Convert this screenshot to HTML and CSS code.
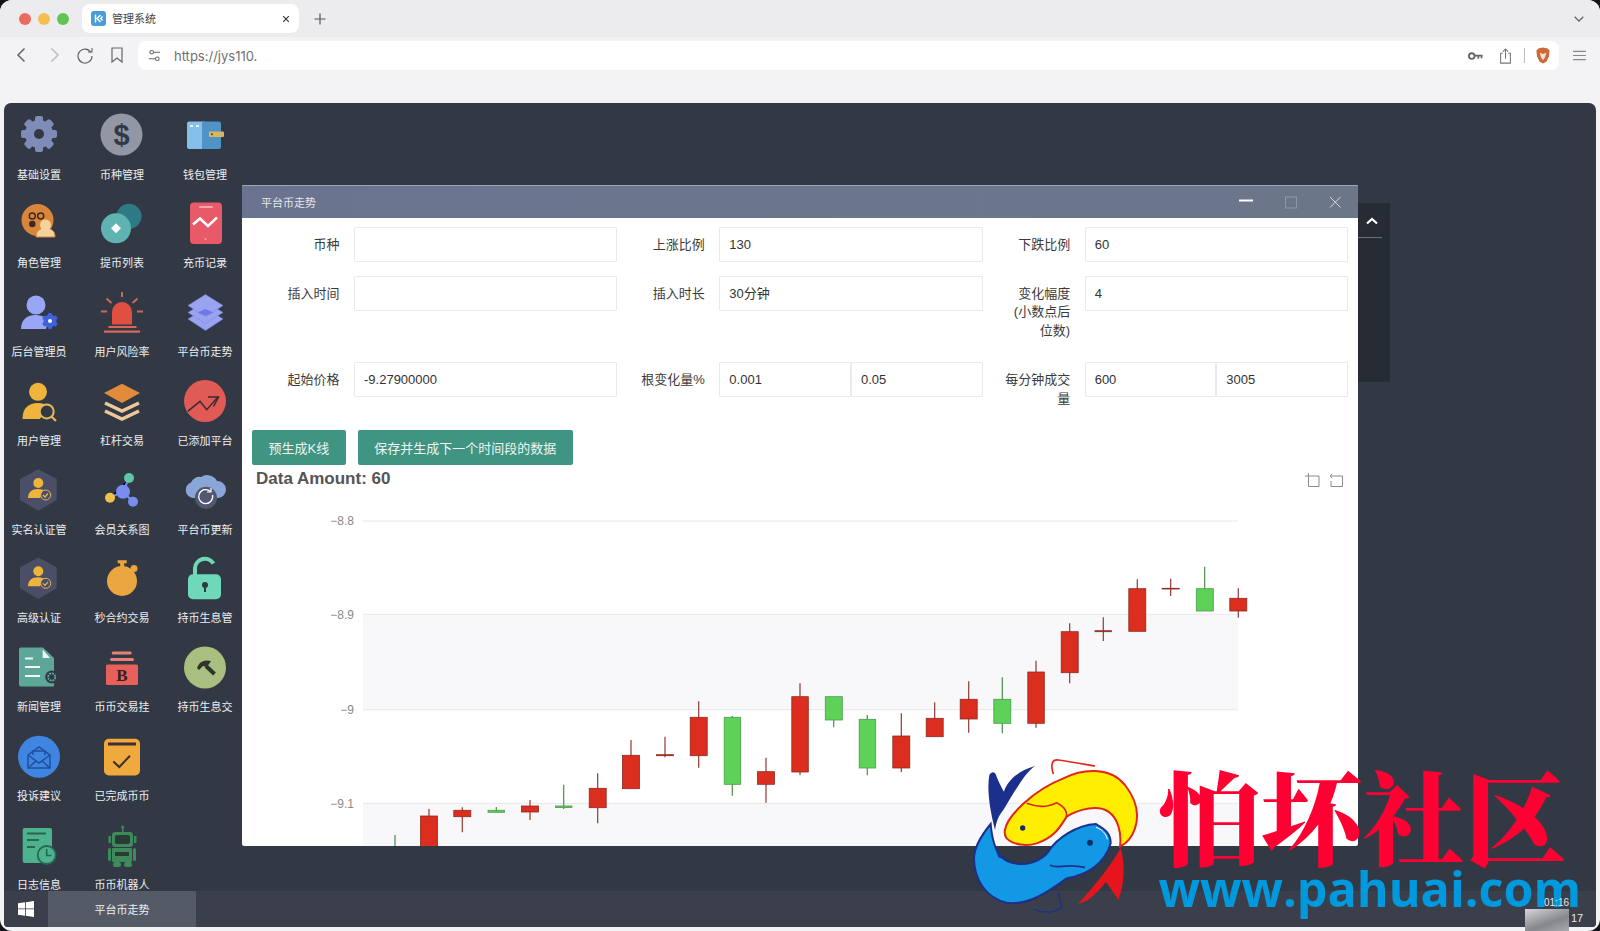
FILE: index.html
```html
<!DOCTYPE html>
<html lang="zh-CN">
<head>
<meta charset="utf-8">
<title>管理系统</title>
<link rel="stylesheet" href="styles.css">
</head>
<body>
<div class="browser">
  <header class="tabstrip">
    <div class="lights"><span class="light red"></span><span class="light yellow"></span><span class="light green"></span></div>
    <div class="tab">
      <svg class="favicon" viewBox="0 0 15 15"><rect width="15" height="15" rx="3" fill="#4a9dd8"/><path d="M4.500 3.500v8M9.500 4 6 7.500 9.500 11M11.500 5.500 9.700 7.500l1.800 2" fill="none" stroke="#fff" stroke-width="1.400"/></svg>
      <span class="tab-title">管理系统</span>
      <svg class="tab-close" viewBox="0 0 10 10"><path d="M1.500 1.500l7 7M8.500 1.500l-7 7" stroke="#333" stroke-width="1.400"/></svg>
    </div>
    <svg class="newtab" viewBox="0 0 12 12"><path d="M6 .5v11M.5 6h11" stroke="#555" stroke-width="1.200"/></svg>
    <svg class="tabmenu" viewBox="0 0 10 6"><path d="M.7.7 5 5 9.300.7" fill="none" stroke="#666" stroke-width="1.300"/></svg>
  </header>
  <nav class="toolbar">
    <svg class="tool" viewBox="0 0 20 20"><path d="M12.500 3.500 6 10l6.500 6.500" fill="none" stroke="#666" stroke-width="1.500"/></svg>
    <svg class="tool" viewBox="0 0 20 20"><path d="M7.500 3.500 14 10l-6.500 6.500" fill="none" stroke="#bdbdc0" stroke-width="1.500"/></svg>
    <svg class="tool" viewBox="0 0 20 20"><path d="M16 7.500A7 7 0 1 0 17 11" fill="none" stroke="#666" stroke-width="1.200"/><path d="M13 7h4V3" fill="none" stroke="#666" stroke-width="1.100"/></svg>
    <svg class="tool" viewBox="0 0 20 20"><path d="M5 3h10v14l-5-4-5 4z" fill="none" stroke="#666" stroke-width="1.200"/></svg>
    <div class="address">
      <svg class="tune" viewBox="0 0 14 14"><circle cx="4" cy="3.500" r="2" fill="none" stroke="#666" stroke-width="1.100"/><path d="M6 3.500h7M1 10.500h7" stroke="#666" stroke-width="1.100"/><circle cx="10" cy="10.500" r="2" fill="none" stroke="#666" stroke-width="1.100"/></svg>
      <span class="url">https://jys110.</span>
      <span class="spacer"></span>
      <svg class="addr-key" viewBox="0 0 16 10"><circle cx="4" cy="5" r="3" fill="none" stroke="#666" stroke-width="2"/><path d="M7 4.500h8.500M11 4.500v3.500M14.500 4.500v3" stroke="#666" stroke-width="1.800"/></svg>
      <svg class="addr-share" viewBox="0 0 14 18"><path d="M4 6H1.500v11h11V6H10" fill="none" stroke="#777" stroke-width="1.200"/><path d="M7 12V1M4 4l3-3 3 3" fill="none" stroke="#777" stroke-width="1.200"/></svg>
      <span class="addr-sep"></span>
      <svg class="addr-brave" viewBox="0 0 16 18"><path d="M3 1.500 8 .5l5 1 2 2.500-.7 6-2.800 5.500L8 17.500l-3.500-2L1.700 10 1 4z" fill="#d0693a"/><path d="M4.500 6 8 7.500 11.500 6 10 11l-2 3-2-3z" fill="#f6e3d2"/></svg>
    </div>
    <svg class="menu" viewBox="0 0 14 12"><path d="M0 1.500h14M0 6h14M0 10.500h14" stroke="#888" stroke-width="1.300"/></svg>
  </nav>
  <main class="desktop">
    <div class="icons">
      <div class="app"><svg class="ico" viewBox="0 0 42 42"><g fill="#7f8cb8"><circle cx="21" cy="21" r="14"/><g><rect x="17" y="3" width="8" height="36" rx="2"/><rect x="17" y="3" width="8" height="36" rx="2" transform="rotate(45 21 21)"/><rect x="17" y="3" width="8" height="36" rx="2" transform="rotate(90 21 21)"/><rect x="17" y="3" width="8" height="36" rx="2" transform="rotate(135 21 21)"/></g></g><circle cx="21" cy="21" r="5" fill="#323945"/></svg><span class="app-name">基础设置</span></div>
      <div class="app"><svg class="ico" viewBox="0 0 42 42"><circle cx="20.500" cy="21.500" r="21" fill="#9297a6"/><text class="ico-dollar" x="20.500" y="32">$</text></svg><span class="app-name">币种管理</span></div>
      <div class="app"><svg class="ico" viewBox="0 0 42 42"><rect x="3" y="8.500" width="19" height="27.500" rx="2" fill="#85c0ea"/><path d="M18 8.500h17a2 2 0 0 1 2 2V34a2 2 0 0 1-2 2H18z" fill="#4f93c7"/><rect x="25" y="18.500" width="15" height="5.500" rx="1" fill="#d8b65e"/><circle cx="28" cy="21.200" r="1" fill="#4a3f25"/><rect x="6" y="12" width="3" height="2" fill="#e8f4fc"/><rect x="12" y="12" width="3" height="2" fill="#e8f4fc"/></svg><span class="app-name">钱包管理</span></div>

      <div class="app"><svg class="ico" viewBox="0 0 42 42"><circle cx="19.500" cy="19" r="16" fill="#d9853c"/><circle cx="14.300" cy="15" r="3" fill="none" stroke="#3a2a22" stroke-width="1.500"/><circle cx="22.700" cy="15" r="3" fill="none" stroke="#3a2a22" stroke-width="1.500"/><circle cx="14.300" cy="23" r="3.200" fill="#3a2a22"/><path d="M18 36c0-6 3-7 5-8a6 6 0 1 1 9 0c2 1 5 2 5 8z" fill="#f2d39a" stroke="#d9853c" stroke-width="1"/></svg><span class="app-name">角色管理</span></div>
      <div class="app"><svg class="ico" viewBox="0 0 42 42"><circle cx="28" cy="15.300" r="12.500" fill="#2d7a84"/><circle cx="15" cy="27.300" r="15" fill="#5fb3b3"/><path d="M15 22.300l5 5-5 5-5-5z" fill="#fff"/></svg><span class="app-name">提币列表</span></div>
      <div class="app"><svg class="ico" viewBox="0 0 42 42"><rect x="6" y="1.500" width="32" height="41.500" rx="4" fill="#e85a68"/><rect x="15" y="5" width="14" height="2" rx="1" fill="#f4a7ae"/><path d="M9 23.500l7-6 8 7.500 9-8.500" fill="none" stroke="#fff" stroke-width="2.500"/><circle cx="21.500" cy="38" r="1" fill="#f4a7ae"/></svg><span class="app-name">充币记录</span></div>

      <div class="app"><svg class="ico" viewBox="0 0 42 42"><circle cx="18" cy="15" r="9.500" fill="#98a6f5"/><path d="M3 39c0-10 7-14 14-14 6 0 11 2 13 6l-2 8z" fill="#98a6f5"/><g fill="#3f62d8"><circle cx="32" cy="31" r="6.500"/><rect x="30" y="23" width="4" height="16" rx="1"/><rect x="30" y="23" width="4" height="16" rx="1" transform="rotate(60 32 31)"/><rect x="30" y="23" width="4" height="16" rx="1" transform="rotate(120 32 31)"/></g><circle cx="32" cy="31" r="2" fill="#fff"/></svg><span class="app-name">后台管理员</span></div>
      <div class="app"><svg class="ico" viewBox="0 0 42 42"><path d="M11 34.500V22a10 10 0 0 1 20 0v12.500z" fill="#e04f3f"/><g fill="#d9695c"><rect x="7.500" y="36" width="28" height="2"/><rect x="3" y="40.500" width="36" height="2.200"/></g><path d="M21 2v5M5.500 8.500l5 4.500M36.500 8.500l-5 4.500M0 21.500h6M36 21.500h6" stroke="#c9685c" stroke-width="2"/></svg><span class="app-name">用户风险率</span></div>
      <div class="app"><svg class="ico" viewBox="0 0 42 42"><g fill="#9aa3ef" stroke="#7b84de" stroke-width=".5"><path d="M21.500 18l17.500 11-17.500 11.500L4 29z"/><path d="M21.500 11.500 39 22.500 21.500 33.500 4 22.500z"/><path d="M21.500 4.500 39 15.500 21.500 27 4 15.500z"/></g><path d="M21.500 19l8 3.500-8 3.500-8-3.500z" fill="#6e78ee"/></svg><span class="app-name">平台币走势</span></div>

      <div class="app"><svg class="ico" viewBox="0 0 42 42"><circle cx="20" cy="12.800" r="9" fill="#efb43c"/><path d="M4.500 40c0-11 6-16 15.500-16 4 0 7 1 9 3l-7 13z" fill="#efb43c"/><circle cx="28.700" cy="32.400" r="7" fill="#323945" stroke="#e8b659" stroke-width="2"/><path d="M33.500 37.500l4.500 4.500" stroke="#e8b659" stroke-width="2.200"/></svg><span class="app-name">用户管理</span></div>
      <div class="app"><svg class="ico" viewBox="0 0 42 42"><path d="M21 4.800 39 14 21 24 3 14z" fill="#e08c3c"/><path d="M4 24l17 8 17-8M4 32l17 8 17-8" fill="none" stroke="#eec79c" stroke-width="3.500"/></svg><span class="app-name">杠杆交易</span></div>
      <div class="app"><svg class="ico" viewBox="0 0 42 42"><circle cx="21" cy="22" r="21" fill="#e05a56"/><path d="M3.700 32.400l12.300-10 6.700 8.300L34 18" fill="none" stroke="#3a2a30" stroke-width="1.500"/><path d="M24 18h10.500l-5 9.500" fill="none" stroke="#3a2a30" stroke-width="1.500"/></svg><span class="app-name">已添加平台</span></div>

      <div class="app"><svg class="ico" viewBox="0 0 42 42"><path d="M20.300 1.300 38.700 11v21L20.300 42.700 2 32V11z" fill="#4a4e66"/><circle cx="20.300" cy="15" r="5" fill="#efb43c"/><path d="M10 30c0-6 4-9 10-9 4 0 6 1 6 2l-4 7z" fill="#efb43c"/><circle cx="27.700" cy="27" r="5" fill="#4a4e66" stroke="#e8b659" stroke-width="1"/><path d="M25 27l2 2 3-3.500" fill="none" stroke="#e8b659" stroke-width="1.200"/></svg><span class="app-name">实名认证管</span></div>
      <div class="app"><svg class="ico" viewBox="0 0 42 42"><path d="M9 29.700 22 23.700 28 10M22 23.700 32 33.700" stroke="#7b8cf0" stroke-width="2"/><circle cx="22" cy="23.700" r="7" fill="#7b8cf0"/><circle cx="28" cy="10" r="5" fill="#5fc7a8"/><circle cx="9" cy="29.700" r="5" fill="#efc14a"/><circle cx="32" cy="33.700" r="5" fill="#7b8cf0"/></svg><span class="app-name">会员关系图</span></div>
      <div class="app"><svg class="ico" viewBox="0 0 42 42"><path d="M9 30a8 8 0 0 1-2-15.500A9 9 0 0 1 17 9 11 11 0 0 1 33 13a8.500 8.500 0 0 1 1 17z" fill="#8aa5d8"/><circle cx="22" cy="29.700" r="11" fill="#525870"/><path d="M28.500 27a7 7 0 1 1-2-3.500" fill="none" stroke="#fff" stroke-width="1.300"/><path d="M27 20v4h-4" fill="none" stroke="#fff" stroke-width="1.200"/></svg><span class="app-name">平台币更新</span></div>

      <div class="app"><svg class="ico" viewBox="0 0 42 42"><path d="M20.300 1.600 38.700 11.300v21L20.300 43 2 32.300v-21z" fill="#4a4e66"/><circle cx="20.300" cy="15.300" r="5" fill="#efb43c"/><path d="M10 30.300c0-6 4-9 10-9 4 0 6 1 6 2l-4 7z" fill="#efb43c"/><circle cx="27.700" cy="27.300" r="5" fill="#4a4e66" stroke="#e8b659" stroke-width="1"/><path d="M25 27.300l2 2 3-3.500" fill="none" stroke="#e8b659" stroke-width="1.200"/></svg><span class="app-name">高级认证</span></div>
      <div class="app"><svg class="ico" viewBox="0 0 42 42"><circle cx="21" cy="25" r="15" fill="#eba63f"/><path d="M16.700 4.300h9v3h-2.500v4h-4v-4h-2.500z" fill="#eba63f"/><circle cx="33" cy="12.600" r="3.500" fill="#eba63f"/><path d="M29 16l3-3" stroke="#eba63f" stroke-width="3"/></svg><span class="app-name">秒合约交易</span></div>
      <div class="app"><svg class="ico" viewBox="0 0 42 42"><path d="M11 19v-7a10 10 0 0 1 18.500-4.500" fill="none" stroke="#6fd8b8" stroke-width="4"/><rect x="4" y="18.300" width="33" height="25" rx="5" fill="#6fd8b8"/><circle cx="21" cy="29" r="3" fill="#2d3a3c"/><rect x="20" y="30" width="2" height="6" fill="#2d3a3c"/></svg><span class="app-name">持币生息管</span></div>

      <div class="app"><svg class="ico" viewBox="0 0 42 42"><path d="M3 2.500h22L36 13v28.500H3a2 2 0 0 1-2-2v-35a2 2 0 0 1 2-2z" fill="#5ca79a"/><path d="M24.700 4.500 32 13h-7.300z" fill="#f2f5f4"/><path d="M7 13.500h8M7 22h15M7 31h15" stroke="#f2f5f4" stroke-width="2"/><circle cx="33.700" cy="32" r="6.500" fill="#323945"/><circle cx="33.700" cy="32" r="3.600" fill="none" stroke="#5ca79a" stroke-width="1.800" stroke-dasharray="2 .8"/></svg><span class="app-name">新闻管理</span></div>
      <div class="app"><svg class="ico" viewBox="0 0 42 42"><rect x="10.700" y="6.500" width="20" height="3" rx="1.500" fill="#e8807a"/><rect x="9" y="13" width="24" height="3" rx="1.500" fill="#e8807a"/><rect x="5" y="19.500" width="32" height="20.500" rx="1.500" fill="#e8605c"/><text class="ico-b" x="21" y="36">B</text></svg><span class="app-name">币币交易挂</span></div>
      <div class="app"><svg class="ico" viewBox="0 0 42 42"><circle cx="21" cy="22.500" r="21" fill="#a9bf7f"/><path d="M13 23c2-6 7-9 14-7l-4 6-4-1-4 4z" fill="#2d3328"/><path d="M22 21l8.500 8" stroke="#2d3328" stroke-width="4"/></svg><span class="app-name">持币生息交</span></div>

      <div class="app"><svg class="ico" viewBox="0 0 42 42"><circle cx="21" cy="22.750" r="21" fill="#3f86e0"/><g fill="none" stroke="#1f4fa0" stroke-width="1.500"><path d="M10 21v13h22V21L21 13z"/><path d="M10 21l11 8 11-8M10 34l8-7M32 34l-8-7"/><path d="M15 21v-4h12v4"/></g></svg><span class="app-name">投诉建议</span></div>
      <div class="app"><svg class="ico" viewBox="0 0 42 42"><rect x="3" y="4.750" width="36" height="36.750" rx="5" fill="#efa93c"/><rect x="7" y="8.500" width="28" height="3" fill="#3a3030"/><path d="M12.300 27.400l6 5.600L29 21.700" fill="none" stroke="#3a3030" stroke-width="2"/></svg><span class="app-name">已完成币币</span></div>
      <div class="app empty"></div>

      <div class="app"><svg class="ico" viewBox="0 0 42 42"><rect x="4.700" y="5" width="29.300" height="35" rx="2" fill="#4db38f"/><path d="M9 10.500h19M9 17h12M9 24h8" stroke="#2c6552" stroke-width="2"/><circle cx="28.700" cy="32" r="9" fill="#4db38f" stroke="#2c6552" stroke-width="1.800"/><path d="M28.700 26v6.500h5" fill="none" stroke="#2c6552" stroke-width="1.600"/></svg><span class="app-name">日志信息</span></div>
      <div class="app"><svg class="ico" viewBox="0 0 42 42"><g fill="#3d8a5c"><rect x="21" y="4" width="1.500" height="5"/><circle cx="21.700" cy="4" r="1.500"/><rect x="11" y="9" width="21" height="15" rx="3"/><rect x="7.500" y="13" width="2.500" height="7"/><rect x="33" y="13" width="2.500" height="7"/><rect x="11" y="25" width="20" height="14" rx="1"/><rect x="7" y="25" width="3" height="13" rx="1.500"/><rect x="32" y="25" width="3" height="13" rx="1.500"/><rect x="12" y="39" width="8" height="5" rx="2"/><rect x="23" y="39" width="8" height="5" rx="2"/></g><rect x="14" y="12" width="15" height="9" rx="2" fill="#2a3a34"/><rect x="14" y="29" width="14" height="4" fill="#2a3a34"/></svg><span class="app-name">币币机器人</span></div>
    </div>

    <aside class="side-panel"><svg class="chev" viewBox="0 0 12 8"><path d="M1 6.500 6 2l5 4.500" fill="none" stroke="#fff" stroke-width="2.200"/></svg><div class="side-line"></div></aside>

    <section class="window">
      <div class="win-title">
        <span class="win-name">平台币走势</span>
        <div class="win-ctrls">
          <svg class="ctl" viewBox="0 0 14 14"><path d="M0 5.500h14" stroke="#fff" stroke-width="2"/></svg>
          <svg class="ctl" viewBox="0 0 14 14"><rect x="1.500" y="2" width="11" height="11" fill="none" stroke="#8e97ab" stroke-width="1"/></svg>
          <svg class="ctl" viewBox="0 0 14 14"><path d="M2 2l10.500 10.500M12.500 2 2 12.500" stroke="#d5d8e0" stroke-width="1"/></svg>
        </div>
      </div>
      <div class="form">
        <div class="item"><label class="lbl">币种</label><div class="fields"><div class="field"></div></div></div>
        <div class="item"><label class="lbl">上涨比例</label><div class="fields"><div class="field">130</div></div></div>
        <div class="item"><label class="lbl">下跌比例</label><div class="fields"><div class="field">60</div></div></div>
        <div class="item"><label class="lbl">插入时间</label><div class="fields"><div class="field"></div></div></div>
        <div class="item"><label class="lbl">插入时长</label><div class="fields"><div class="field">30分钟</div></div></div>
        <div class="item"><label class="lbl">变化幅度(小数点后位数)</label><div class="fields"><div class="field">4</div></div></div>
        <div class="item"><label class="lbl">起始价格</label><div class="fields"><div class="field">-9.27900000</div></div></div>
        <div class="item"><label class="lbl">根变化量%</label><div class="fields"><div class="field">0.001</div><div class="field">0.05</div></div></div>
        <div class="item"><label class="lbl">每分钟成交量</label><div class="fields"><div class="field">600</div><div class="field">3005</div></div></div>
      </div>
      <div class="actions"><button class="btn">预生成K线</button><button class="btn">保存并生成下一个时间段的数据</button></div>
      <div class="chart-head">
        <span class="chart-title">Data Amount: 60</span>
        <div class="chart-tools">
          <svg class="tb" viewBox="0 0 15 15"><path d="M3.500 0v13.500H14V3H0" fill="none" stroke="#8a8a8a" stroke-width="1"/></svg>
          <svg class="tb" viewBox="0 0 15 15"><path d="M3.200.8 1 3l2.200 2.200M1 3h12.500v10.500H2V8" fill="none" stroke="#8a8a8a" stroke-width="1"/></svg>
        </div>
      </div>
      <svg class="chart" viewBox="242 491 1116 355">
        <rect class="band" x="363" y="614.300" width="875" height="95.400"/>
        <rect class="band" x="363" y="803.300" width="875" height="50"/>
        <g class="grid"><path d="M363 521h875M363 614.300h875M363 709.700h875M363 803.300h875"/></g>
        <g class="axis">
          <text x="354" y="525">−8.8</text><text x="354" y="618.500">−8.9</text><text x="354" y="713.500">−9</text><text x="354" y="807.500">−9.1</text>
        </g>
        <g class="gr"><path d="M395 835v12"/></g>
        <g class="rd">
          <path d="M429 809v8M462.300 807.300v25M530 800v20M597.700 773.300v50M631 740v16M665 736.700v20.600M698.700 701.300v66.400M766 757.700v45M800 683.300v91.700M901.300 713.300v58.700M934.700 702.300v17M968.700 681.300v51.400M1036 660.700v67M1069.700 623.300v60M1103.300 617.300v23.700M1137.300 579.300v10M1170.700 578.700v17.300M1238.300 588.300v29.400"/>
          <rect x="420.500" y="816" width="17" height="36"/>
          <rect x="453.800" y="810.300" width="17" height="6.400"/>
          <rect x="521.500" y="806" width="17" height="6"/>
          <rect x="589.200" y="788.300" width="17" height="19.400"/>
          <rect x="622.500" y="755.300" width="17" height="33.400"/>
          <rect x="656.500" y="754.700" width="17" height="1"/>
          <rect x="690.200" y="717.300" width="17" height="38.400"/>
          <rect x="757.500" y="771.700" width="17" height="12.600"/>
          <rect x="791.800" y="696.700" width="16.500" height="75.300"/>
          <rect x="892.800" y="736" width="17" height="32"/>
          <rect x="926.200" y="718.300" width="17" height="18.400"/>
          <rect x="960.200" y="699.300" width="17" height="19.700"/>
          <rect x="1027.800" y="672" width="16.500" height="51.300"/>
          <rect x="1061.200" y="631.700" width="17" height="41"/>
          <rect x="1095" y="630.700" width="16.500" height="1"/>
          <rect x="1128.800" y="588.700" width="17" height="42.600"/>
          <rect x="1162.200" y="588.300" width="17" height=".7"/>
          <rect x="1229.800" y="598.300" width="17" height="12.700"/>
        </g>
        <g class="gr">
          <path d="M496.300 807v5M563.700 784.700v24.300M732.300 716v79.700M833.700 696.700v30.600M867.300 715v60.300M1002.300 677.300v56M1204.700 566.700v44.300"/>
          <rect x="488" y="810.300" width="16.500" height="2"/>
          <rect x="555.500" y="806" width="16.500" height="1.500"/>
          <rect x="724.200" y="717.300" width="16.500" height="67"/>
          <rect x="825.300" y="696.700" width="17" height="23.300"/>
          <rect x="859.200" y="719.300" width="16.500" height="48.700"/>
          <rect x="993.800" y="699.300" width="17" height="24"/>
          <rect x="1196.300" y="588.700" width="17" height="22.300"/>
        </g>
      </svg>
    </section>

    <footer class="taskbar">
      <svg class="win-logo" viewBox="0 0 16 16"><path d="M0 2.300 7 1.300V7.500H0zM7.800 1.200 16 0V7.500H7.800zM0 8.300H7V14.700L0 13.700zM7.800 8.300H16V16L7.800 14.800z" fill="#fff"/></svg>
      <div class="task-active">平台币走势</div>
    </footer>
  </main>
  <div class="watermark">
    <svg class="wm-logo" viewBox="0 0 540 510">
      <path d="M58 75C66 62 76 64 80 80 88 100 96 115 102 125 112 90 150 60 195 48 170 65 150 100 130 130L100 180C92 190 80 205 75 240 60 180 50 120 58 75Z" fill="#1c2f8c"/>
      <path d="M62 222C35 255 12 290 12 325 12 390 50 445 110 458 175 468 235 425 290 385 345 375 405 345 422 280 422 250 405 238 378 222 320 225 260 265 235 305 225 320 190 345 150 342 105 340 70 320 62 222Z" fill="#1398e6" stroke="#1c2f8c" stroke-width="6"/>
      <path d="M70 285C80 315 100 335 125 338L85 322Z" fill="#1c2f8c"/>
      <path d="M378 232C395 238 408 250 412 268" fill="none" stroke="#fff" stroke-width="3"/>
      <path d="M240 345C262 360 282 338 345 352" fill="none" stroke="#1c2f8c" stroke-width="5"/>
      <circle cx="360" cy="278" r="9" fill="#10306a"/>
      <path d="M190 478C220 490 260 490 275 470L265 430" fill="none" stroke="#1c2f8c" stroke-width="4"/>
      <path d="M452 295C420 350 380 400 325 462 355 455 385 425 408 395L445 450C465 400 465 340 452 295Z" fill="#e6141c"/>
      <path d="M250 72C240 40 248 28 265 30 300 35 340 42 375 48" fill="none" stroke="#e1261c" stroke-width="5"/>
      <path d="M105 240C110 200 190 120 280 85 340 55 420 50 465 105 500 150 510 190 495 235 485 265 470 280 450 290 455 250 445 205 415 185 385 165 330 175 290 200 270 230 255 262 200 280 170 290 130 285 110 265 103 255 103 248 105 240Z" fill="#ffee00" stroke="#e1261c" stroke-width="6"/>
      <path d="M170 160C200 170 225 175 260 158 285 170 295 190 287 205" fill="none" stroke="#e1261c" stroke-width="5"/>
      <circle cx="158" cy="234" r="8" fill="#10306a"/>
    </svg>
    <div class="wm-text">
      <div class="wm-cn">怕坏社区</div>
      <div class="wm-url">www.pahuai.com</div>
    </div>
  </div>
  <div class="clock-top">01:16</div>
  <div class="clock-box"></div>
  <div class="clock-bottom">17</div>
</div>
</body>
</html>
```
FILE: styles.css
```css
* { box-sizing: border-box; }
html, body { margin: 0; height: 100%; background: #14121a; overflow: hidden; }
body { font-family: "Liberation Sans", "Noto Sans CJK SC", sans-serif; }
svg { display: block; flex: none; }

.browser { position: relative; width: 1600px; height: 931px; background: #f3f3f5; border-radius: 12px; overflow: hidden; display: flex; flex-direction: column; }

.tabstrip { height: 37px; background: #ececee; display: flex; align-items: center; padding: 4px 0 0 19px; position: relative; }
.lights { display: flex; gap: 7px; margin-top: -4px; }
.light { width: 12px; height: 12px; border-radius: 50%; }
.red { background: #ec6a5e; }
.yellow { background: #f4bf4f; }
.green { background: #61c554; }
.tab { width: 217px; height: 29px; margin: -4px 0 0 13px; background: #fff; border-radius: 8px; display: flex; align-items: center; padding: 0 9px; }
.favicon { width: 15px; height: 15px; }
.tab-title { margin: -1px 0 0 6px; font-size: 11px; color: #444; flex: 1; }
.tab-close { width: 8px; height: 8px; }
.newtab { width: 12px; height: 12px; margin: -4px 0 0 15px; }
.tabmenu { width: 10px; height: 6px; margin: -4px 16px 0 auto; }

.toolbar { height: 66px; display: flex; align-items: flex-start; padding: 4px 0 0 12px; gap: 11.500px; }
.tool { width: 20px; height: 20px; margin-top: 4px; }
.address { width: 1421px; height: 29px; background: #fff; border-radius: 8px; display: flex; align-items: center; padding-left: 10px; }
.tune { width: 13px; height: 13px; }
.url { margin-left: 13px; font-family: "Inter", "Liberation Sans", sans-serif; font-size: 13px; color: #6f6f73; }
.spacer { flex: 1; }
.addr-key { width: 15px; height: 10px; margin-right: 16px; }
.addr-share { width: 13px; height: 16px; margin-right: 12px; }
.addr-sep { width: 1px; height: 15px; background: #bbb; margin-right: 10px; }
.addr-brave { width: 16px; height: 17px; margin-right: 8px; }
.menu { width: 13px; height: 11px; margin: 9px 0 0 2px; }

.desktop { flex: none; position: relative; height: 823.500px; margin: 0 4px; background: #323945; border-radius: 7px 7px 4px 4px; display: flex; flex-direction: column; overflow: hidden; }
.icons { flex: 1; min-height: 0; overflow: hidden; display: grid; grid-template-columns: repeat(3, 70px); grid-auto-rows: 88.750px; column-gap: 13px; align-content: start; padding-top: 9.500px; }
.app { display: flex; flex-direction: column; align-items: center; }
.ico { width: 42px; height: 42px; overflow: visible; }
.app-name { margin-top: 13px; font-size: 11px; line-height: 15px; color: #eceef2; white-space: nowrap; }
.ico-dollar { font: bold 29px "Liberation Sans", sans-serif; fill: #323945; text-anchor: middle; }
.ico-b { font: bold 17px "Liberation Serif", serif; fill: #3a2020; text-anchor: middle; }

.taskbar { flex: none; height: 36px; background: #3a3f4b; display: flex; align-items: center; position: relative; }
.win-logo { width: 16px; height: 16px; margin-left: 14px; }
.task-active { width: 148px; height: 36px; margin-left: 14px; background: #555b66; color: #eceef2; font-size: 11px; display: flex; align-items: center; justify-content: center; }

.side-panel { position: absolute; left: 1350px; top: 100px; width: 36px; height: 179px; background: #272b33; padding: 14px 8px 0 0; }
.chev { width: 12px; height: 8px; margin-left: 12px; }
.side-line { height: 1px; background: #6a6e76; margin-top: 12px; }

.window { position: absolute; left: 238px; top: 82px; width: 1116px; height: 661px; background: #fff; border-radius: 2px; overflow: hidden; }
.win-title { height: 33px; background: linear-gradient(90deg, #6a7490, #6c7689); border-top: 1px solid #a0a6b4; display: flex; align-items: center; padding: 0 16px 0 19px; }
.win-name { font-size: 11px; color: #e4e6ec; flex: 1; }
.win-ctrls { display: flex; gap: 30.500px; }
.ctl { width: 14px; height: 14px; }

.form { display: grid; grid-template-columns: repeat(3, 1fr); row-gap: 14px; padding: 9px 10px 0; }
.item { display: flex; align-items: flex-start; }
.lbl { width: 102px; flex: none; padding: 8.500px 14.500px 7.800px 21.500px; font-size: 13px; line-height: 18.700px; color: #3a3a3a; text-align: right; }
.fields { flex: 1; display: flex; }
.field { flex: 1; height: 35px; border: 1px solid #e9eaed; border-radius: 1px; padding: 0 9px; font-size: 13px; line-height: 33px; color: #333; background: #fff; }

.actions { display: flex; gap: 12px; padding: 14px 0 1px 10px; }
.btn { height: 35px; padding: 0 16.500px; border: 0; border-radius: 2px; background: #3f9482; color: #eef6f4; font: 13px "Liberation Sans", "Noto Sans CJK SC", sans-serif; }

.chart-head { height: 25px; display: flex; align-items: center; justify-content: space-between; padding: 1px 14px 0 14px; }
.chart-title { font-size: 17px; font-weight: bold; color: #555; }
.chart-tools { display: flex; gap: 9px; margin-top: 3px; }
.tb { width: 15px; height: 15px; overflow: visible; }

.chart { width: 1116px; height: 355px; }
.band { fill: #f8f8fa; }
.grid path { stroke: #e8e8ea; stroke-width: 1; fill: none; }
.axis text { font: 12px "Liberation Sans", sans-serif; fill: #8a8a8a; text-anchor: end; }
.rd rect { fill: #db2e1f; stroke: #8e2a1e; stroke-width: .8; }
.rd path { stroke: #8e3a30; stroke-width: 1.200; fill: none; }
.gr rect { fill: #5dd158; stroke: #4a9d49; stroke-width: .8; }
.gr path { stroke: #4a8d49; stroke-width: 1.200; fill: none; }

.clock-top { position: absolute; left: 1544px; top: 896px; font-size: 10px; line-height: 13px; color: #e8e8ea; }
.clock-box { position: absolute; left: 1525px; top: 909px; width: 44px; height: 22px; background: linear-gradient(160deg, #d6d6d8, #85878c 60%, #a8aaad); }
.clock-bottom { position: absolute; left: 1571px; top: 911px; font-size: 11px; line-height: 14px; color: #e8e8ea; }

.watermark { position: absolute; left: 970px; top: 750px; display: flex; pointer-events: none; }
.wm-logo { width: 180px; height: 170px; }
.wm-text { margin: 5px 0 0 8.500px; display: flex; flex-direction: column; }
.wm-cn { font-family: "Noto Serif CJK SC", "Noto Sans CJK SC", serif; font-size: 102px; font-weight: 900; line-height: 118px; color: #ff0033; white-space: nowrap; }
.wm-url { margin-top: -15px; font-family: "Open Sans", sans-serif; font-weight: 700; font-size: 48.500px; line-height: 60px; color: #0099dd; white-space: nowrap; }
```
